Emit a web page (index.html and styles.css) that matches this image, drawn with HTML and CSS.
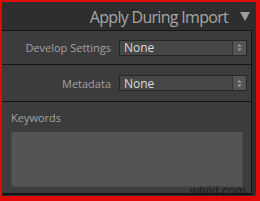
FILE: index.html
```html
<!DOCTYPE html>
<html lang="en">
<head>
    <meta charset="UTF-8">
    <title>Apply During Import</title>
    <link rel="stylesheet" href="styles.css">
</head>
<body>
    <div class="frame">
        <div class="header">
            <span class="title">Apply During Import</span>
            <span class="arrow"></span>
        </div>
        <div class="panel">
            <div class="row row-develop">
                <span class="label">Develop Settings</span>
                <div class="select">
                    <span>None</span>
                    <span class="spin">
                        <svg width="7" height="9" viewBox="0 0 7 9"><path d="M1 3.5 L3.5 1 L6 3.5 Z M1 5.5 L3.5 8 L6 5.5 Z" fill="#9a9a9a"/></svg>
                    </span>
                </div>
            </div>
            <div class="row row-meta">
                <span class="label">Metadata</span>
                <div class="select">
                    <span>None</span>
                    <span class="spin">
                        <svg width="7" height="9" viewBox="0 0 7 9"><path d="M1 3.5 L3.5 1 L6 3.5 Z M1 5.5 L3.5 8 L6 5.5 Z" fill="#9a9a9a"/></svg>
                    </span>
                </div>
            </div>
            <div class="keywords">
                <div class="kw-label">Keywords</div>
                <div class="kw-box"></div>
            </div>
        </div>
        <span class="watermark">wtvid.com</span>
    </div>
</body>
</html>
```

FILE: styles.css
```css
body { margin: 0; background: #e00; font-family: "Open Sans", "DejaVu Sans", sans-serif; }
.frame { position: relative; width: 260px; height: 201px; box-sizing: border-box; border: solid #e10a0a; border-width: 2px 4px 5px 2px; background: #2e2e2e; }
.header { height: 28px; display: flex; justify-content: flex-end; align-items: center; padding-right: 6px; }
.title { font-size: 16px; color: #a6a6a6; letter-spacing: -0.7px; margin-right: 12px; margin-top: 2px; }
.arrow { width: 0; height: 0; border-left: 5px solid transparent; border-right: 5px solid transparent; border-top: 9px solid #9c9c9c; }
.panel { background: #3c3c3c; margin-right: 4px; border-top: 1px solid #141414; border-right: 1px solid #141414; border-bottom: 2px solid #141414; height: 162px; }
.row { display: flex; align-items: center; border-bottom: 1px solid #151515; }
.row-develop { height: 33px; }
.row-meta { height: 36px; }
.label { width: 109px; text-align: right; font-size: 11px; color: #a3a3a3; margin-right: 8px; }
.select { width: 122px; height: 14px; background: #474747; border: 1px solid #262626; display: flex; align-items: center; justify-content: space-between; font-size: 12px; color: #dcdcdc; padding-left: 4px; box-sizing: content-box; }
.spin { width: 13px; height: 14px; background: #555; border-left: 1px solid #333; display: flex; align-items: center; justify-content: center; }
.keywords { padding: 8px 8px 0 9px; }
.kw-label { font-size: 11px; color: #a3a3a3; height: 20px; }
.kw-box { height: 54px; margin-top: 1px; background: #545454; border: 1px solid #484848; border-top-color: #3a3a3a; }
.watermark { position: absolute; left: 188px; top: 182px; font-family: "Liberation Sans", sans-serif; font-size: 12.5px; color: #1e1e1e; }
```
